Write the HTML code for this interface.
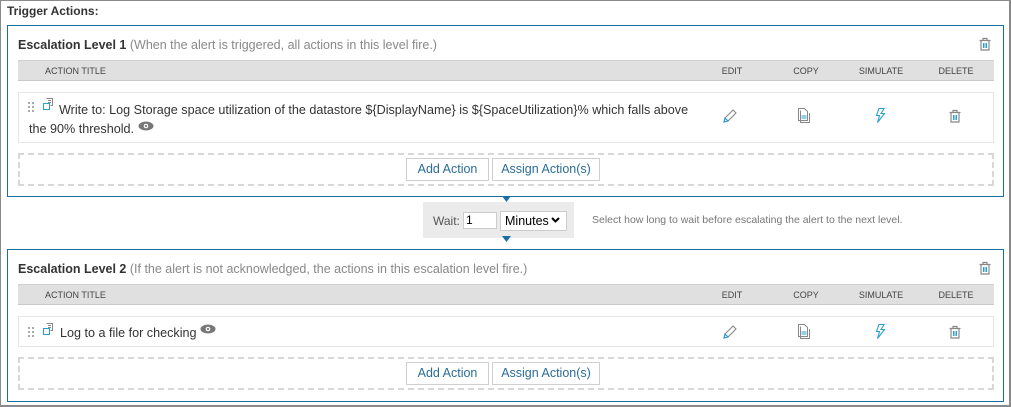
<!DOCTYPE html>
<html><head><meta charset="utf-8"><style>
*{box-sizing:border-box;margin:0;padding:0}
body{width:1011px;height:407px;position:relative;background:#fff;font-family:"Liberation Sans",sans-serif;color:#333;overflow:hidden}
.abs{position:absolute}
.outer{left:0;top:0;width:1011px;height:407px;border:1px solid #8a8a8a;border-right:2px solid #8a8a8a;border-bottom:2px solid #8a8a8a}
.box{left:7px;width:997px;border:1px solid #1b6ea0}
.title{font-size:12.5px;white-space:nowrap}
.title b{color:#333}
.title span{color:#888}
.hdr{left:10px;width:976px;height:21px;background:#e0e0e0;border-bottom:1px solid #c8c8c8;border-top:1px solid #cfcfcf;font-size:9px;color:#444;line-height:20px}
.hdr div{position:absolute;top:0;transform:translateX(-50%)}
.row{left:10px;width:976px;border:1px solid #e6e6e6;font-size:12.6px;color:#333}
.dash{left:10px;width:976px;height:33px;border:2px dashed #d8d8d8}
.btn{position:absolute;height:23px;border:1px solid #cfcfcf;background:#fff;color:#2b6d96;font-size:12.5px;line-height:21px;text-align:center}
.ic{position:absolute}
</style></head><body>
<div class="abs outer"></div>
<div class="abs" style="left:7px;top:4px;font-size:12px;font-weight:bold;color:#333">Trigger Actions:</div>

<!-- Level 1 -->
<div class="abs box" style="top:25px;height:172px">
  <div class="abs title" style="left:10px;top:12px"><b>Escalation Level 1</b> <span>(When the alert is triggered, all actions in this level fire.)</span></div>
  <svg class="ic" style="left:970px;top:11px" width="14" height="14" viewBox="0 0 14 14"><path d="M1.5 3.5h11M5 3.5V1.5h4v2M3 3.5v9.5h8V3.5" fill="none" stroke="#888" stroke-width="1.2"/><path d="M5.5 6v5M7 6v5M8.5 6v5" stroke="#2a9fd0" stroke-width="1"/></svg>
  <div class="abs hdr" style="top:34px"><div style="left:27px;transform:none">ACTION TITLE</div><div style="left:714px">EDIT</div><div style="left:788px">COPY</div><div style="left:863px">SIMULATE</div><div style="left:938px">DELETE</div></div>
  <div class="abs row" style="top:66px;height:51px">
    <svg class="ic" style="left:9px;top:9px" width="6" height="10"><g fill="#aaa"><rect x="0" y="0" width="2" height="2"/><rect x="4" y="0" width="2" height="2"/><rect x="0" y="4" width="2" height="2"/><rect x="4" y="4" width="2" height="2"/><rect x="0" y="8" width="2" height="2"/><rect x="4" y="8" width="2" height="2"/></g></svg>
    <svg class="ic" style="left:24px;top:5px" width="11" height="13" viewBox="0 0 11 13"><path d="M3.5 0.5h6v7h-2" fill="none" stroke="#888"/><path d="M5 2.5h3M5 4.5h3" stroke="#888"/><rect x="0.5" y="5.5" width="6" height="6" fill="none" stroke="#2a9fd0"/></svg>
    <div class="abs" style="left:40px;top:8px;width:660px;line-height:19px;white-space:nowrap">Write to: Log Storage space utilization of the datastore ${DisplayName} is ${SpaceUtilization}% which falls above</div>
    <div class="abs" style="left:10px;top:27px;line-height:19px">the 90% threshold.</div>
    <svg class="ic" style="left:119px;top:28px" width="16" height="10" viewBox="0 0 16 10"><ellipse cx="8" cy="5" rx="7.5" ry="4.5" fill="#777"/><circle cx="8" cy="5" r="2.3" fill="#fff"/><circle cx="8" cy="5" r="1.1" fill="#777"/></svg>
    <svg class="ic" style="left:704px;top:15px" width="15" height="15" viewBox="0 0 15 15"><path d="M1 14l1-4 8-8 3 3-8 8z" fill="none" stroke="#888" stroke-width="1.1"/><path d="M1 14l1-4 3 3z" fill="none" stroke="#2a9fd0" stroke-width="1.1"/></svg>
    <svg class="ic" style="left:779px;top:15px" width="12" height="15" viewBox="0 0 12 15"><path d="M0.5 0.5h6l3 3v9h-9z" fill="none" stroke="#888"/><path d="M2.5 2.5v12h9V5" fill="none" stroke="#888"/><path d="M3.5 8h5M3.5 10h5" stroke="#2a9fd0"/></svg>
    <svg class="ic" style="left:856px;top:15px" width="10" height="15" viewBox="0 0 10 15"><path d="M4 0.5h5l-3 5h3.5l-7 9 2-7h-3z" fill="none" stroke="#2a9fd0" stroke-width="1.1"/></svg>
    <svg class="ic" style="left:929px;top:16px" width="14" height="14" viewBox="0 0 14 14"><path d="M1.5 3.5h11M5 3.5V1.5h4v2M3 3.5v9.5h8V3.5" fill="none" stroke="#888" stroke-width="1.2"/><path d="M5.5 6v5M7 6v5M8.5 6v5" stroke="#2a9fd0" stroke-width="1"/></svg>
  </div>
  <div class="abs dash" style="top:127px"></div>
  <div class="btn" style="left:398px;top:132px;width:83px">Add Action</div>
  <div class="btn" style="left:484px;top:132px;width:108px">Assign Action(s)</div>
</div>

<!-- wait -->
<svg class="abs" style="left:502px;top:196px" width="9" height="6"><path d="M0 0h9L4.5 6z" fill="#1b6ea0"/></svg>
<div class="abs" style="left:423px;top:202px;width:151px;height:36px;background:#ebebeb"></div>
<div class="abs" style="left:433px;top:214px;font-size:12px;color:#555">Wait:</div>
<div class="abs" style="left:463px;top:212px;width:34px;height:17px;border:1px solid #ccc;background:#fff;font-size:12px;line-height:15px;padding-left:2px;color:#000">1</div>
<div class="abs" style="left:500px;top:211px;width:67px;height:20px;border:1px solid #ccc;background:#fff;font-size:12.5px;line-height:18px;padding-left:4px;color:#000">Minutes</div>
<svg class="abs" style="left:551px;top:217px" width="9" height="7"><path d="M1 1l3.5 3.5L8 1" fill="none" stroke="#000" stroke-width="2"/></svg>
<svg class="abs" style="left:502px;top:236px" width="9" height="6"><path d="M0 0h9L4.5 6z" fill="#1b6ea0"/></svg>
<div class="abs" style="left:592px;top:214px;font-size:10.5px;color:#777;white-space:nowrap">Select how long to wait before escalating the alert to the next level.</div>

<!-- Level 2 -->
<div class="abs box" style="top:249px;height:153px">
  <div class="abs title" style="left:10px;top:12px"><b>Escalation Level 2</b> <span>(If the alert is not acknowledged, the actions in this escalation level fire.)</span></div>
  <svg class="ic" style="left:970px;top:11px" width="14" height="14" viewBox="0 0 14 14"><path d="M1.5 3.5h11M5 3.5V1.5h4v2M3 3.5v9.5h8V3.5" fill="none" stroke="#888" stroke-width="1.2"/><path d="M5.5 6v5M7 6v5M8.5 6v5" stroke="#2a9fd0" stroke-width="1"/></svg>
  <div class="abs hdr" style="top:34px"><div style="left:27px;transform:none">ACTION TITLE</div><div style="left:714px">EDIT</div><div style="left:788px">COPY</div><div style="left:863px">SIMULATE</div><div style="left:938px">DELETE</div></div>
  <div class="abs row" style="top:66px;height:31px">
    <svg class="ic" style="left:9px;top:10px" width="6" height="10"><g fill="#aaa"><rect x="0" y="0" width="2" height="2"/><rect x="4" y="0" width="2" height="2"/><rect x="0" y="4" width="2" height="2"/><rect x="4" y="4" width="2" height="2"/><rect x="0" y="8" width="2" height="2"/><rect x="4" y="8" width="2" height="2"/></g></svg>
    <svg class="ic" style="left:24px;top:6px" width="11" height="13" viewBox="0 0 11 13"><path d="M3.5 0.5h6v7h-2" fill="none" stroke="#888"/><path d="M5 2.5h3M5 4.5h3" stroke="#888"/><rect x="0.5" y="5.5" width="6" height="6" fill="none" stroke="#2a9fd0"/></svg>
    <div class="abs" style="left:41px;top:8px;line-height:17px">Log to a file for checking</div>
    <svg class="ic" style="left:181px;top:7px" width="16" height="10" viewBox="0 0 16 10"><ellipse cx="8" cy="5" rx="7.5" ry="4.5" fill="#777"/><circle cx="8" cy="5" r="2.3" fill="#fff"/><circle cx="8" cy="5" r="1.1" fill="#777"/></svg>
    <svg class="ic" style="left:704px;top:7px" width="15" height="15" viewBox="0 0 15 15"><path d="M1 14l1-4 8-8 3 3-8 8z" fill="none" stroke="#888" stroke-width="1.1"/><path d="M1 14l1-4 3 3z" fill="none" stroke="#2a9fd0" stroke-width="1.1"/></svg>
    <svg class="ic" style="left:779px;top:7px" width="12" height="15" viewBox="0 0 12 15"><path d="M0.5 0.5h6l3 3v9h-9z" fill="none" stroke="#888"/><path d="M2.5 2.5v12h9V5" fill="none" stroke="#888"/><path d="M3.5 8h5M3.5 10h5" stroke="#2a9fd0"/></svg>
    <svg class="ic" style="left:856px;top:7px" width="10" height="15" viewBox="0 0 10 15"><path d="M4 0.5h5l-3 5h3.5l-7 9 2-7h-3z" fill="none" stroke="#2a9fd0" stroke-width="1.1"/></svg>
    <svg class="ic" style="left:929px;top:8px" width="14" height="14" viewBox="0 0 14 14"><path d="M1.5 3.5h11M5 3.5V1.5h4v2M3 3.5v9.5h8V3.5" fill="none" stroke="#888" stroke-width="1.2"/><path d="M5.5 6v5M7 6v5M8.5 6v5" stroke="#2a9fd0" stroke-width="1"/></svg>
  </div>
  <div class="abs dash" style="top:107px"></div>
  <div class="btn" style="left:398px;top:112px;width:83px">Add Action</div>
  <div class="btn" style="left:484px;top:112px;width:108px">Assign Action(s)</div>
</div>
</body></html>
